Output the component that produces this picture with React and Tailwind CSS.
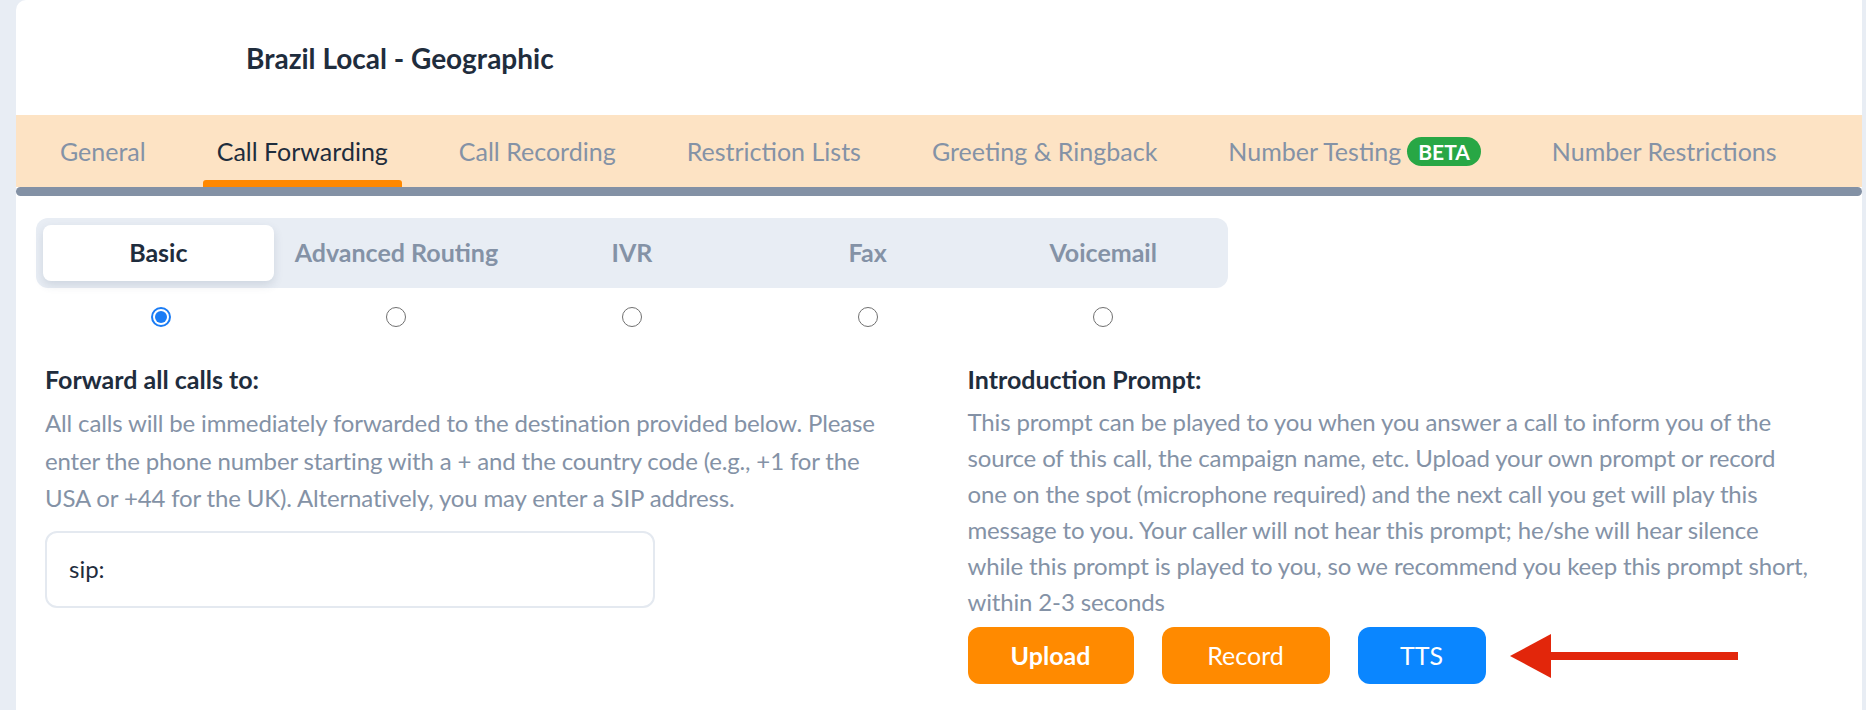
import { useState } from "react";

const TABS = [
  "General",
  "Call Forwarding",
  "Call Recording",
  "Restriction Lists",
  "Greeting & Ringback",
  "Number Testing",
  "Number Restrictions",
];

const MODES = ["Basic", "Advanced Routing", "IVR", "Fax", "Voicemail"];

const FORWARD_LINES = [
  "All calls will be immediately forwarded to the destination provided below. Please",
  "enter the phone number starting with a + and the country code (e.g., +1 for the",
  "USA or +44 for the UK). Alternatively, you may enter a SIP address.",
];

const PROMPT_LINES = [
  "This prompt can be played to you when you answer a call to inform you of the",
  "source of this call, the campaign name, etc. Upload your own prompt or record",
  "one on the spot (microphone required) and the next call you get will play this",
  "message to you. Your caller will not hear this prompt; he/she will hear silence",
  "while this prompt is played to you, so we recommend you keep this prompt short,",
  "within 2-3 seconds",
];

function Radio({ checked }) {
  return checked ? (
    <span className="w-[20px] h-[20px] rounded-full border-2 border-[#1a7cf5] bg-white flex items-center justify-center">
      <span className="w-[12px] h-[12px] rounded-full bg-[#1a7cf5]" />
    </span>
  ) : (
    <span className="w-[20px] h-[20px] rounded-full border-[1.5px] border-[#707070] bg-white" />
  );
}

export default function App() {
  const [activeTab] = useState("Call Forwarding");
  const [mode, setMode] = useState("Basic");

  return (
    <div className="min-h-screen bg-[#e8edf4] pl-[16px] pr-[4px] font-['Lato','Noto_Sans',sans-serif]">
      <div className="bg-white rounded-tl-[10px] min-h-[710px]">
        {/* Header */}
        <div className="h-[115px] flex items-center pl-[230px]">
          <h1 className="text-[28px] font-bold text-[#1f2d3d]">Brazil Local - Geographic</h1>
        </div>

        {/* Tabs */}
        <div className="bg-[#fde3c4] h-[72px] flex pl-[30px] gap-[43px]">
          {TABS.map((tab) => (
            <div key={tab} className="flex flex-col">
              <div
                className={`flex-1 flex items-center pt-[8px] px-[14px] text-[25px] ${
                  activeTab === tab ? "text-[#1f2d3d]" : "text-[#8492a6]"
                }`}
              >
                {tab}
                {tab === "Number Testing" && (
                  <span className="ml-[6px] h-[29px] px-[11px] rounded-full bg-[#28a745] text-white text-[21px] font-bold flex items-center">
                    BETA
                  </span>
                )}
              </div>
              <div className={`h-[7px] rounded-t-[3px] ${activeTab === tab ? "bg-[#ff8800]" : ""}`} />
            </div>
          ))}
        </div>
        <div className="h-[9px] bg-[#8391a5] rounded-full" />

        {/* Mode switch */}
        <div className="ml-[20px] mt-[22px] w-[1192px]">
          <div className="h-[70px] bg-[#e8edf4] rounded-[12px] p-[7px] grid grid-cols-5">
            {MODES.map((m) => (
              <button
                key={m}
                onClick={() => setMode(m)}
                className={`rounded-[8px] text-[25px] font-bold ${
                  mode === m
                    ? "bg-white text-[#1f2d3d] shadow-[0_4px_10px_rgba(60,80,110,0.15)] mr-[5px]"
                    : "text-[#8492a6]"
                }`}
              >
                {m}
              </button>
            ))}
          </div>
          <div className="grid grid-cols-5 px-[7px] mt-[19px]">
            {MODES.map((m) => (
              <div key={m} className="flex justify-center">
                <Radio checked={mode === m} />
              </div>
            ))}
          </div>
        </div>

        {/* Columns */}
        <div className="grid grid-cols-2 gap-[45px] pl-[29px] pr-[17px] mt-[37px]">
          <div>
            <h3 className="text-[25px] font-bold text-[#1f2d3d] leading-[30px]">Forward all calls to:</h3>
            <p className="mt-[10px] text-[24px] tracking-[-0.15px] leading-[37.5px] text-[#8492a6] whitespace-nowrap">
              {FORWARD_LINES.map((line, i) => (
                <span key={i} className="block">{line}</span>
              ))}
            </p>
            <div className="mt-[14px] w-[610px] h-[77px] border-2 border-[#e4e9f0] rounded-[12px] flex items-center px-[22px] text-[24px] text-[#1f2d3d]">
              sip:
            </div>
          </div>

          <div>
            <h3 className="text-[25px] font-bold text-[#1f2d3d] leading-[30px]">Introduction Prompt:</h3>
            <p className="mt-[10px] text-[24px] tracking-[-0.15px] leading-[36px] text-[#8492a6] whitespace-nowrap">
              {PROMPT_LINES.map((line, i) => (
                <span key={i} className="block">{line}</span>
              ))}
            </p>
            <div className="mt-[7px] flex items-center gap-[28px]">
              <button className="w-[166px] h-[57px] rounded-[12px] bg-[#ff8a00] text-white text-[25px] font-bold">
                Upload
              </button>
              <button className="w-[168px] h-[57px] rounded-[12px] bg-[#ff8a00] text-white text-[25px]">
                Record
              </button>
              <button className="w-[128px] h-[57px] rounded-[12px] bg-[#0a86ff] text-white text-[25px]">
                TTS
              </button>
              <svg width="230" height="46" viewBox="0 0 230 46" className="-ml-[4px]">
                <path d="M0 23 L41 1 L41 45 Z" fill="#e2260b" />
                <rect x="38" y="19" width="190" height="8" fill="#e2260b" />
              </svg>
            </div>
          </div>
        </div>
      </div>
    </div>
  );
}
